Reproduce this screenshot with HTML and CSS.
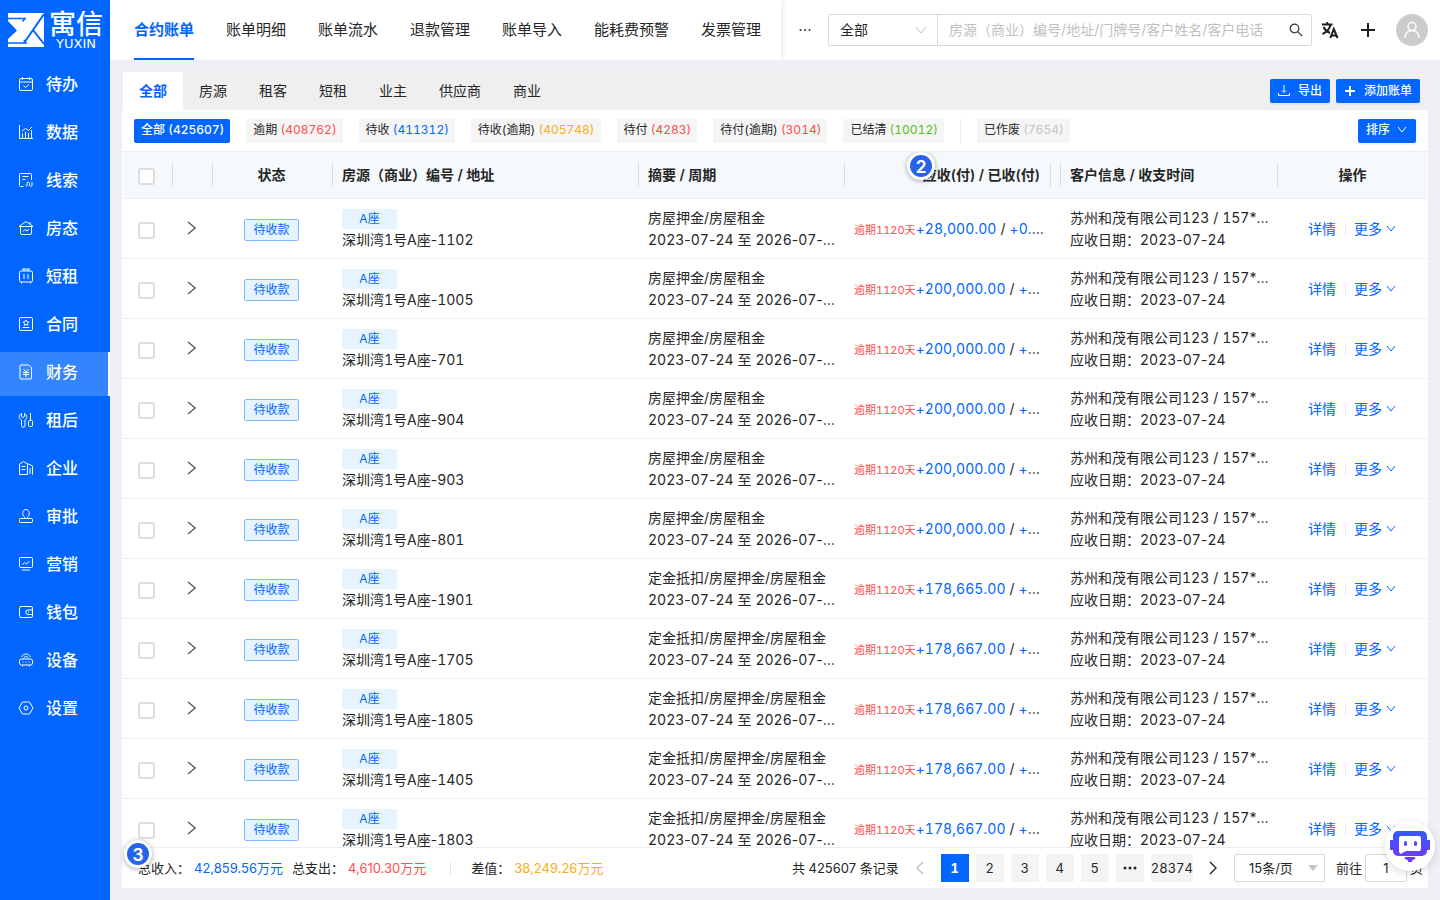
FILE: index.html
```html
<!DOCTYPE html>
<html lang="zh-CN">
<head>
<meta charset="utf-8">
<title>寓信 - 合约账单</title>
<link rel="stylesheet" href="styles.css">
</head>
<body>
<div class="app">
  <aside class="sidebar">
    <div class="logo">
      <svg class="logo-mark" viewBox="0 0 36 34" aria-hidden="true">
        <path fill="#fff" d="M0 0h36v34H0z"/>
        <path fill="#0066ff" d="M0 8l9 9.500L0 26z"/>
        <g fill="none" stroke="#0066ff" stroke-width="1.600">
          <path d="M0 5.500h17l-2.500 3M0 30h18l-2-3"/>
          <path stroke-width="2" d="M36 1L16 30M25 17l11 14"/>
        </g>
      </svg>
      <div class="logo-text"><span class="logo-cn">寓信</span><span class="logo-en">YUXIN</span></div>
    </div>
    <nav class="menu">
      <a class="menu-item" href="#"><svg class="icon" viewBox="0 0 16 16"><rect x="1.500" y="2.500" width="13" height="12" rx="1.500"/><path d="M1.500 6h13M4.500 1v3M11.500 1v3M5.500 9.500l2 2 3.500-3"/></svg>待办</a>
      <a class="menu-item" href="#"><svg class="icon" viewBox="0 0 16 16"><path d="M1.500 1v13.500H15M4.500 14V9.500M7.500 14V8M10.500 14V9M13.500 14V6M4 7l3.500-2.500 3 2L14 3"/></svg>数据</a>
      <a class="menu-item" href="#"><svg class="icon" viewBox="0 0 16 16"><path d="M5.500 14.500h-3a1 1 0 01-1-1v-11a1 1 0 011-1h10a1 1 0 011 1V8M4.500 4.500h6M4.500 7.500h3M8 13.500c0 1 1 1 1 0v-2c0-2 2.500-2 2.500 0v1.500c0 2 2.500 2 2.500 0V10"/></svg>线索</a>
      <a class="menu-item" href="#"><svg class="icon" viewBox="0 0 16 16"><path d="M1 6.500l7-5 7 5zM2.500 7v6a1.500 1.500 0 001.500 1.500h8a1.500 1.500 0 001.500-1.500V7M12 2v2M5 11.500l2-2 2 1.500 2-2"/></svg>房态</a>
      <a class="menu-item" href="#"><svg class="icon" viewBox="0 0 16 16"><rect x="1.500" y="3" width="13" height="11" rx="1.500"/><path d="M4 1h8M6 1v2M10 1v2M6 6v5M10 6v5M3.500 14v1.500M12.500 14v1.500"/></svg>短租</a>
      <a class="menu-item" href="#"><svg class="icon" viewBox="0 0 16 16"><rect x="1.500" y="1.500" width="13" height="13" rx="1.500"/><path d="M8 4l.9 1.700 1.900.3-1.300 1.400.3 1.900L8 8.500l-1.800.8.3-1.900L5.200 6l1.900-.3zM4.500 11.500h7"/></svg>合同</a>
      <a class="menu-item active" href="#"><svg class="icon" viewBox="0 0 16 16"><path d="M3 1h7.500l3 2.500V14a1 1 0 01-1 1H3a1 1 0 01-1-1V2a1 1 0 011-1zM5.500 5L8 8l2.500-3M8 8v5M5 8.500h6M5 10.500h6"/></svg>财务</a>
      <a class="menu-item" href="#"><svg class="icon" viewBox="0 0 16 16"><path d="M3.500 1.500v3l1.500 1 1.500-1v-3c3 1.500 3 5 .5 6.500v5.500a1.500 1.500 0 01-3.500 0V8C.5 6.500.5 3 3.500 1.500zM12.500 1v7.500"/><rect x="10.500" y="8.500" width="4" height="6" rx="1"/></svg>租后</a>
      <a class="menu-item" href="#"><svg class="icon" viewBox="0 0 16 16"><path d="M1.500 4l4-2.500 4 2.500v10.500h-8zM9.500 3.500l5 2.500v8.500M12 8v6M3.500 6.500h4M3.500 9.500h4"/></svg>企业</a>
      <a class="menu-item" href="#"><svg class="icon" viewBox="0 0 16 16"><path d="M6.500 10.500V9c-3-2-2-7.500 1.500-7.500S12.500 7 9.500 9v1.500"/><rect x="1.500" y="10.500" width="13" height="4" rx="1"/></svg>审批</a>
      <a class="menu-item" href="#"><svg class="icon" viewBox="0 0 16 16"><rect x="1.500" y="1.500" width="13" height="10" rx="1"/><path d="M4.500 8.500l2-2 2 1.500 3-3M4 14h8"/></svg>营销</a>
      <a class="menu-item" href="#"><svg class="icon" viewBox="0 0 16 16"><rect x="1.500" y="2.500" width="13" height="11" rx="1.500"/><path d="M14.500 6H10a2 2 0 000 4.500h4.500M10 8.200h1"/></svg>钱包</a>
      <a class="menu-item" href="#"><svg class="icon" viewBox="0 0 16 16"><rect x="1.500" y="7" width="13" height="6" rx="2"/><path d="M3.500 5c2-4 7-4 9 0M5.500 6.500c1-2.500 4-2.500 5 0M4.500 13v1.500M11.500 13v1.500M4.500 10h1M7.500 10h1M10.500 10h1"/></svg>设备</a>
      <a class="menu-item" href="#"><svg class="icon" viewBox="0 0 16 16"><path d="M4.500 2h7L15 8l-3.500 6h-7L1 8z"/><circle cx="8" cy="8" r="2"/></svg>设置</a>
    </nav>
  </aside>

  <div class="main">
    <header class="header">
      <nav class="topnav">
        <a class="topnav-item active" href="#">合约账单</a>
        <a class="topnav-item" href="#">账单明细</a>
        <a class="topnav-item" href="#">账单流水</a>
        <a class="topnav-item" href="#">退款管理</a>
        <a class="topnav-item" href="#">账单导入</a>
        <a class="topnav-item" href="#">能耗费预警</a>
        <a class="topnav-item" href="#">发票管理</a>
      </nav>
      <div class="header-tools">
        <button class="more-btn" aria-label="更多菜单"><svg viewBox="0 0 12 4"><circle cx="1.500" cy="2" r="1"/><circle cx="6" cy="2" r="1"/><circle cx="10.500" cy="2" r="1"/></svg></button>
        <form class="search">
          <span class="search-scope">
            <select class="scope-select" aria-label="搜索范围"><option>全部</option></select>
            <svg class="chev scope-chev" viewBox="0 0 12 8"><path d="M1 1l5 6 5-6"/></svg>
          </span>
          <input class="search-input" type="text" aria-label="搜索" placeholder="房源（商业）编号/地址/门牌号/客户姓名/客户电话">
          <button class="search-btn" type="button" aria-label="搜索"><svg viewBox="0 0 14 14"><circle cx="5.500" cy="5.500" r="4.300"/><path d="M8.700 8.700l4.500 4.500"/></svg></button>
        </form>
        <button class="tool-btn" aria-label="切换语言"><svg class="lang" viewBox="0 0 18 18"><path d="M1 3.500h10.500M6.200 1v2.500M2.500 6c1.500 3 4 5 6.500 6M9.500 4C8.500 8 5 11.500 1.500 13M9.300 17l3.500-9 3.700 9M10.500 14.500h5"/></svg></button>
        <button class="tool-btn" aria-label="新建"><svg class="plus" viewBox="0 0 14 14"><path d="M7 0v14M0 7h14"/></svg></button>
        <button class="avatar" aria-label="个人中心"><svg viewBox="0 0 18 18"><circle cx="9" cy="5.500" r="4"/><path d="M2 17c0-4.500 3-7.500 7-7.500s7 3 7 7.500"/></svg></button>
      </div>
    </header>

    <main class="content">
      <div class="tabs">
        <button class="tab active">全部</button><button class="tab">房源</button><button class="tab">租客</button><button class="tab">短租</button><button class="tab">业主</button><button class="tab">供应商</button><button class="tab">商业</button>
        <div class="tab-actions">
          <button class="primary"><svg class="btn-icon" viewBox="0 0 12 12"><path d="M6 0v7M4 5.500l2 2 2-2M.5 8v2.500h11V8"/></svg>导出</button>
          <button class="primary"><svg class="btn-icon bold" viewBox="0 0 12 12"><path d="M6 1v10M1 6h10"/></svg>添加账单</button>
        </div>
      </div>
      <div class="filters">
        <button class="chip active">全部 (425607)</button>
        <button class="chip">逾期 <span class="red">(408762)</span></button>
        <button class="chip">待收 <span class="blue">(411312)</span></button>
        <button class="chip">待收(逾期) <span class="orange">(405748)</span></button>
        <button class="chip">待付 <span class="red">(4283)</span></button>
        <button class="chip">待付(逾期) <span class="red">(3014)</span></button>
        <button class="chip">已结清 <span class="green">(10012)</span></button>
        <span class="filter-line"></span>
        <button class="chip">已作废 <span class="gray">(7654)</span></button>
        <button class="primary sort">排序<svg class="chev" viewBox="0 0 12 8"><path d="M2 1l4 5 4-5"/></svg></button>
      </div>
      <div class="table-wrap">
        <table class="bills">
          <colgroup><col class="c-check"><col class="c-expand"><col class="c-status"><col class="c-address"><col class="c-summary"><col class="c-amount"><col class="c-gap"><col class="c-client"><col class="c-action"></colgroup>
          <thead>
            <tr>
              <th><input class="check" type="checkbox" aria-label="全选"></th>
              <th></th>
              <th class="center">状态</th>
              <th>房源（商业）编号 / 地址</th>
              <th>摘要 / 周期</th>
              <th class="right">应收(付) / 已收(付)<span class="marker marker-amount">2</span></th>
              <th></th>
              <th>客户信息 / 收支时间</th>
              <th class="action">操作</th>
            </tr>
          </thead>
          <tbody id="rows"></tbody>
        </table>
      </div>
      <footer class="footer">
        <div class="totals">
          <span>总收入：</span><span class="sum blue">42,859.56万元</span>
          <span>总支出：</span><span class="sum red">4,610.30万元</span>
          <span class="total-line"></span>
          <span>差值：</span><span class="sum orange">38,249.26万元</span>
          <span class="marker marker-total">3</span>
        </div>
        <div class="pager">
          <span class="pager-total">共 425607 条记录</span>
          <button class="arrow off" aria-label="上一页"><svg viewBox="0 0 8 14"><path d="M7 1L1 7l6 6"/></svg></button>
          <div class="pages">
            <button class="page active">1</button><button class="page">2</button><button class="page">3</button><button class="page">4</button><button class="page">5</button>
            <button class="page" aria-label="向后5页"><svg class="dots" viewBox="0 0 14 4"><circle cx="2" cy="2" r="1.500"/><circle cx="7" cy="2" r="1.500"/><circle cx="12" cy="2" r="1.500"/></svg></button>
            <button class="page">28374</button>
          </div>
          <button class="arrow" aria-label="下一页"><svg viewBox="0 0 8 14"><path d="M1 1l6 6-6 6"/></svg></button>
          <span class="size-box"><select class="size-select" aria-label="每页条数"><option>15条/页</option></select><span class="caret"></span></span>
          <label class="jump">前往<input class="jump-input" type="text" value="1">页</label>
        </div>
      </footer>
    </main>
  </div>
</div>
<button class="bot" aria-label="智能客服">
  <svg viewBox="0 0 42 34">
    <defs><linearGradient id="botFill" gradientUnits="userSpaceOnUse" x1="0" y1="0" x2="0" y2="33"><stop offset="0" stop-color="#2f5dff"/><stop offset="1" stop-color="#7a35f5"/></linearGradient></defs>
    <path fill="url(#botFill)" d="M1 11h3v10H2a1 1 0 01-1-1zM38 11h3v9a1 1 0 01-1 1h-2zM9 2h24a5 5 0 015 5v15a5 5 0 01-5 5H9a5 5 0 01-5-5V7a5 5 0 015-5zM16 28h10l.5 1.500-3.500 2V33h-4v-1.500l-3.500-2z"/>
    <path fill="#fff" d="M12 7h18a2 2 0 012 2v11a2 2 0 01-2 2H17l-5.500 3L10 23V9a2 2 0 012-2z"/>
    <rect x="15" y="12" width="3" height="5" rx="1.500" fill="url(#botFill)"/><rect x="25" y="12" width="3" height="5" rx="1.500" fill="url(#botFill)"/>
  </svg>
</button>
<script src="app.js"></script>
</body>
</html>
```

FILE: styles.css
```css
* { box-sizing: border-box; }

body {
  margin: 0;
  font: 14px/22px Inter, "Noto Sans CJK SC", sans-serif;
  color: #262626;
  background: #eff0f6;
}

button, input, select { font: inherit; color: inherit; margin: 0; }
button { border: 0; padding: 0; background: none; cursor: pointer; }
a { text-decoration: none; color: inherit; }
svg { display: block; flex: none; }
.num, .chip, .page { font-variant-numeric: tabular-nums; }

.app { display: flex; height: 100vh; overflow: hidden; }

/* Sidebar */
.sidebar { flex: none; width: 110px; background: #0066ff; color: #fff; }
.logo { display: flex; align-items: center; gap: 5px; height: 60px; padding-left: 8px; }
.logo-mark { width: 36px; height: 34px; }
.logo-text { display: flex; flex-direction: column; align-items: center; padding-top: 2px; }
.logo-cn { font-size: 27px; line-height: 26px; font-weight: 500; }
.logo-en { font: 13px/12px "DejaVu Sans", sans-serif; }
.menu { display: flex; flex-direction: column; gap: 4px; padding-top: 4px; }
.menu-item {
  display: flex; align-items: center; gap: 12px;
  height: 44px; padding: 0 0 4px 18px;
  font-size: 16px; font-weight: 500;
}
.menu-item.active { background: #3385ff; border-right: 2px solid #fff; }
.icon { width: 16px; height: 16px; fill: none; stroke: #fff; stroke-width: 1; }

/* Header */
.main { flex: 1; min-width: 0; display: flex; flex-direction: column; }
.header { flex: none; display: flex; justify-content: space-between; height: 60px; background: #fff; }
.topnav { display: flex; gap: 32px; padding: 0 20px 0 24px; font-size: 15px; white-space: nowrap; box-shadow: 2px 0 6px rgba(0, 0, 0, .08); clip-path: inset(0 -8px 0 0); }
.topnav-item { display: flex; align-items: center; border-top: 2px solid transparent; border-bottom: 2px solid transparent; }
.topnav-item.active { color: #0066ff; font-weight: 600; border-bottom-color: #0066ff; }
.header-tools { flex: 1; min-width: 0; display: flex; align-items: center; padding: 0 12px 0 18px; }
.more-btn svg { width: 12px; height: 4px; fill: #333; }
.search { flex: 1; min-width: 0; display: flex; height: 32px; margin: 0 10px 0 17px; border: 1px solid #d9d9d9; border-radius: 2px; }
.search-scope { position: relative; flex: none; width: 109px; border-right: 1px solid #d9d9d9; }
.scope-select { appearance: none; width: 100%; height: 30px; padding: 0 11px; border: 0; background: none; }
.chev { width: 12px; height: 8px; fill: none; stroke: currentColor; stroke-width: 1; }
.scope-chev { position: absolute; right: 10px; top: 11px; color: #bfbfbf; pointer-events: none; }
.search-input { flex: 1; min-width: 0; padding: 0 0 0 11px; border: 0; outline: 0; background: none; }
.search-input::placeholder { color: #bfbfbf; opacity: 1; }
.search-btn { width: 31px; display: flex; align-items: center; justify-content: center; }
.search-btn svg { width: 14px; height: 14px; fill: none; stroke: #333; stroke-width: 1.2; }
.tool-btn { flex: none; display: flex; align-items: center; justify-content: center; width: 16px; height: 32px; margin-right: 22px; }
.tool-btn svg { fill: none; stroke: #1f1f1f; stroke-width: 2; }
.tool-btn .lang { width: 18px; height: 18px; }
.tool-btn .plus { width: 14px; height: 14px; }
.avatar { flex: none; display: flex; align-items: center; justify-content: center; width: 32px; height: 32px; margin-left: -2px; border-radius: 50%; background: #ccc; }
.avatar svg { width: 18px; height: 18px; fill: none; stroke: #fff; stroke-width: 1.5; }

/* Content */
.content { flex: 1; min-height: 0; display: flex; flex-direction: column; padding: 12px; }
.tabs { flex: none; display: flex; align-items: center; height: 38px; padding-left: 1px; background: #efefef; }
.tab { height: 38px; padding: 0 16px; }
.tab.active { background: #fff; color: #0066ff; font-weight: 700; }
.tab-actions { display: flex; gap: 6px; margin-left: auto; padding-right: 8px; }
.primary {
  display: flex; align-items: center; gap: 8px;
  height: 24px; padding: 0 8px; border-radius: 2px;
  background: #0066ff; color: #fff; font-size: 12px; font-weight: 500;
  box-shadow: 0 2px 0 rgba(0, 0, 0, .04);
}
.btn-icon { width: 12px; height: 12px; fill: none; stroke: #fff; stroke-width: 1; }
.btn-icon.bold { stroke-width: 2; }

.filters { flex: none; display: flex; align-items: center; gap: 16px; height: 41px; padding: 0 12px; background: #fff; white-space: nowrap; }
.chip { height: 24px; padding: 0 6px 2px 7px; border-radius: 2px; background: #f5f5f5; font-size: 12px; line-height: 22px; }
.chip.active { background: #0066ff; color: #fff; font-weight: 500; }
.filter-line { width: 1px; height: 24px; background: #eee; }
.sort { gap: 6px; margin-left: auto; padding-bottom: 2px; }

.red { color: #ff4d4f; }
.blue { color: #0066ff; }
.orange { color: #faad14; }
.green { color: #52c41a; }
.gray { color: #bfc4cd; }

/* Bills table */
.table-wrap { flex: 1; min-height: 0; overflow: hidden; padding: 0 1px; background: #fff; border-top: 1px solid #ebeef2; }
.bills { width: 100%; table-layout: fixed; border-collapse: separate; border-spacing: 0; }
.c-check { width: 50px; }
.c-expand { width: 40px; }
.c-status { width: 120px; }
.c-summary { width: 206px; }
.c-amount { width: 206px; }
.c-gap { width: 10px; }
.c-client { width: 217px; }
.c-action { width: 149px; }
.bills th {
  position: relative; height: 47px; padding: 0 9px;
  background: #f5f9fc; border-bottom: 1px solid #ebeef2;
  text-align: left; font-weight: 600; white-space: nowrap;
}
.bills th:not(:last-child)::after { content: ""; position: absolute; right: 0; top: 11px; width: 1px; height: 24px; background: #d9dce0; }
.bills td { height: 60px; padding: 8px 9px 7px; border-bottom: 1px solid #ebeef2; vertical-align: middle; }
.bills .center { text-align: center; padding-left: 8px; padding-right: 11px; }
.bills th.action { text-align: center; }
.bills th.right { text-align: right; padding-right: 11px; }
.bills td.amount { padding-right: 5px; }
.bills th:first-child, .bills td:first-child { padding-left: 15px; }
.check {
  appearance: none; display: block; width: 17px; height: 17px; margin-top: 2px;
  border: 2px solid #dedede; border-radius: 3px; background: #fff;
}
.expand { display: block; padding: 4px 5px 6px; }
.expand svg { width: 9px; height: 14px; fill: none; stroke: #666; stroke-width: 1.5; }
.status { display: inline-block; width: 55px; height: 22px; border: 1px solid #80b9ff; border-radius: 2px; background: #e6f4ff; color: #0066ff; font-size: 12px; line-height: 20px; vertical-align: middle; }
.building { display: block; width: 55px; height: 20px; margin-top: 2px; border-radius: 2px; background: #e6f4ff; color: #0066ff; font-size: 12px; line-height: 20px; text-align: center; }
.line { overflow: hidden; text-overflow: ellipsis; white-space: nowrap; }
.overdue { color: #ff4d4f; font-size: 11px; }
.ops { display: flex; align-items: center; justify-content: center; color: #0066ff; }
.ops-line { width: 1px; height: 13px; margin: 0 8px 0 9px; background: #ebebeb; }
.ops-more { display: flex; align-items: center; gap: 3px; }

/* Footer */
.footer { flex: none; display: flex; align-items: center; justify-content: space-between; height: 41px; padding: 0 5px 0 16px; background: #fff; border-top: 1px solid #ebeef2; font-size: 13px; white-space: nowrap; }
.totals { position: relative; display: flex; align-items: center; }
.sum { margin: 0 9px 0 4px; }
.total-line { width: 1px; height: 13px; margin: 0 20px 0 15px; background: #e4e4e4; }
.pager { display: flex; align-items: center; gap: 6px; }
.pager-total { margin-right: 1px; }
.pages { display: flex; gap: 7px; }
.arrow { width: 29px; height: 28px; display: flex; align-items: center; justify-content: center; }
.arrow svg { width: 8px; height: 14px; fill: none; stroke: #262626; stroke-width: 1.4; }
.arrow.off svg { stroke: #bfbfbf; }
.page { display: flex; align-items: center; justify-content: center; min-width: 28px; height: 28px; border-radius: 2px; background: #f4f4f5; }
.page.active { background: #0066ff; color: #fff; font-weight: 700; border-radius: 0; }
.dots { width: 14px; height: 4px; fill: #262626; }
.size-box { position: relative; }
.size-select { appearance: none; display: block; width: 91px; height: 28px; padding: 0 14px; border: 1px solid #d9d9d9; border-radius: 2px; background: #fff; }
.caret { position: absolute; right: 7px; top: 11px; border: 5px solid transparent; border-top: 6px solid #c0c4cc; border-bottom: 0; pointer-events: none; }
.jump { display: flex; align-items: center; gap: 3px; margin-left: 5px; }
.jump-input { width: 42px; height: 28px; padding: 0; border: 1px solid #d9d9d9; border-radius: 2px; text-align: center; background: #fff; }

/* Overlays */
.marker {
  position: absolute; display: flex; align-items: center; justify-content: center;
  width: 28px; height: 28px; padding-top: 2px; border: 3px solid #fff; border-radius: 50%;
  background: #2563eb; color: #fff; font: 700 17px/20px Inter, sans-serif;
  box-shadow: 0 1px 5px rgba(0, 0, 0, .35);
}
.marker-amount { left: 62px; top: 0; }
.marker-total { left: -14px; top: -17px; }
.bot { position: fixed; right: 5px; bottom: 29px; display: flex; align-items: center; justify-content: center; width: 50px; height: 50px; border-radius: 50%; background: #fff; box-shadow: 0 2px 8px rgba(0, 0, 0, .15); }
.bot svg { width: 42px; height: 34px; }
```

FILE: app.js
```js
const deposit = '房屋押金/房屋租金';
const earnest = '定金抵扣/房屋押金/房屋租金';
const bills = [
  ['1102', deposit, '+28,000.00'],
  ['1005', deposit, '+200,000.00'],
  ['701', deposit, '+200,000.00'],
  ['904', deposit, '+200,000.00'],
  ['903', deposit, '+200,000.00'],
  ['801', deposit, '+200,000.00'],
  ['1901', earnest, '+178,665.00'],
  ['1705', earnest, '+178,667.00'],
  ['1805', earnest, '+178,667.00'],
  ['1405', earnest, '+178,667.00'],
  ['1803', earnest, '+178,667.00']
];

// Digits line up in columns; signs and dashes keep their own width.
const num = text => text.replace(/\d+/g, '<span class="num">$&</span>');

document.getElementById('rows').innerHTML = bills.map(([room, summary, amount]) => `
  <tr>
    <td><input class="check" type="checkbox" aria-label="选择 ${room}"></td>
    <td><button class="expand" aria-label="展开"><svg viewBox="0 0 9 14"><path d="M1 1l7 6-7 6"/></svg></button></td>
    <td class="center"><span class="status">待收款</span></td>
    <td><span class="building">A座</span><div class="line">${num(`深圳湾1号A座-${room}`)}</div></td>
    <td><div class="line">${summary}</div><div class="line">${num('2023-07-24 至 2026-07-23')}</div></td>
    <td class="amount"><div class="line"><span class="overdue">${num('逾期1120天')}</span><span class="blue">${num(amount)}</span> / <span class="blue">${num('+0.00')}</span></div></td>
    <td></td>
    <td><div class="line">${num('苏州和茂有限公司123 / 157')}********</div><div class="line">${num('应收日期：2023-07-24')}</div></td>
    <td><div class="ops"><a href="#">详情</a><span class="ops-line"></span><a class="ops-more" href="#">更多<svg class="chev" viewBox="0 0 12 8"><path d="M2 1l4 5 4-5"/></svg></a></div></td>
  </tr>`).join('');
```
